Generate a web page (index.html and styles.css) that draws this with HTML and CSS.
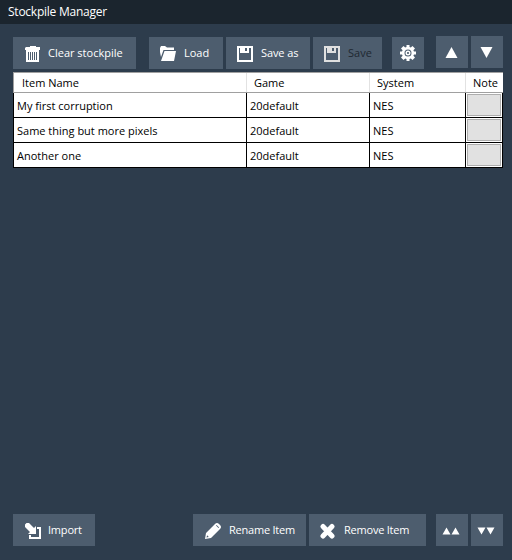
FILE: index.html
```html
<!DOCTYPE html>
<html lang="en">
<head>
<meta charset="utf-8">
<title>Stockpile Manager</title>
<link rel="stylesheet" href="styles.css">
</head>
<body>
<header class="titlebar">Stockpile Manager</header>
<main>
  <div class="toolbar">
    <button class="btn clear"><svg viewBox="0 0 16 16"><path d="M5 0h6v1h4v3H0V2l1-1h4zM1 4h13v12H1z"/><path class="cut" d="M3.500 6v8M5.500 6v8M7.500 6v8M9.500 6v8M11.500 6v8"/></svg><span>Clear stockpile</span></button>
    <button class="btn load"><svg viewBox="0 0 16 16"><path d="M0 2l1-2h4l2 1.500h7V4H3.500L1 11 0 6zM4.500 5H16l-2 10H1z"/></svg><span>Load</span></button>
    <button class="btn saveas"><svg viewBox="0 0 16 16"><path fill-rule="evenodd" d="M0 0h16v16H0zM2 2v12h12V2h-2v5H3V2zM8 2v3h2V2z"/></svg><span>Save as</span></button>
    <button class="btn save" disabled><svg viewBox="0 0 16 16"><path fill-rule="evenodd" d="M0 0h16v16H0zM2 2v12h12V2h-2v5H3V2zM8 2v3h2V2z"/></svg><span>Save</span></button>
    <button class="btn square gear" aria-label="Settings"><svg viewBox="0 0 16 16"><path fill-rule="evenodd" d="M6.500 0h3v2l1.300.6L12.500 1 15 3.500l-1.600 1.700.6 1.300h2v3h-2l-.6 1.300 1.600 1.700L12.500 15l-1.700-1.600-1.300.6v2h-3v-2l-1.300-.6L3.500 15 1 12.500l1.600-1.700L2 9.500H0v-3h2l.6-1.300L1 3.500 3.500 1l1.700 1.600L6.500 2zM8 4.500a3.500 3.500 0 1 0 0 7 3.500 3.500 0 0 0 0-7z"/><circle class="ring" cx="8" cy="8" r="1.800"/></svg></button>
    <button class="btn square up" aria-label="Move up"><svg class="single" viewBox="0 0 13 11"><path d="M6.500 0l6 11H.5z"/></svg></button>
    <button class="btn square down" aria-label="Move down"><svg class="single" viewBox="0 0 13 11"><path d="M.5 0h12l-6 11z"/></svg></button>
  </div>
  <section class="grid">
    <div class="row head"><div>Item Name</div><div>Game</div><div>System</div><div>Note</div></div>
    <div class="row"><div>My first corruption</div><div>20default</div><div>NES</div><div><i class="note"></i></div></div>
    <div class="row"><div>Same thing but more pixels</div><div>20default</div><div>NES</div><div><i class="note"></i></div></div>
    <div class="row"><div>Another one</div><div>20default</div><div>NES</div><div><i class="note"></i></div></div>
  </section>
</main>
<footer class="actions">
  <button class="btn import"><svg viewBox="0 0 16 16"><path d="M0 1.500L1.500 0h2.500L9 5l2-2v8H3l2-2L0 4zM12 4h4v12H4v-4h2v2h8V6h-2z"/></svg><span>Import</span></button>
  <button class="btn rename"><svg viewBox="0 0 16 16"><path fill-rule="evenodd" d="M0 16l1-6L10 1q2-2 4 0l1 1q2 2 0 4l-9 9zM1.500 14.500l2.300-.6-1.700-1.700zM11 2.500l2.500 2.500.6-.6-2.500-2.500z"/></svg><span>Rename Item</span></button>
  <button class="btn remove"><svg viewBox="0 0 16 16"><path class="cross" d="M3 3.500l9 9.500M12 3.500l-9 9.500"/></svg><span>Remove Item</span></button>
  <button class="btn square first" aria-label="Move to top"><svg class="pair" viewBox="0 0 18 8"><path d="M4.500.5l4 7h-8zM13.500.5l4 7h-8z"/></svg></button>
  <button class="btn square last" aria-label="Move to bottom"><svg class="pair" viewBox="0 0 18 8"><path d="M.5.500h8l-4 7zM9.500.500h8l-4 7z"/></svg></button>
</footer>
</body>
</html>
```
FILE: styles.css
```css
* { box-sizing: border-box; }
body {
  margin: 0;
  height: 560px;
  display: flex;
  flex-direction: column;
  overflow: hidden;
  background: #2d3c4c;
  color: #fff;
  font: 11px/16px "Open Sans", "Noto Sans", sans-serif;
}
.titlebar {
  height: 24px;
  padding-left: 8px;
  background: #1b252e;
  font-size: 12px;
  line-height: 24px;
  letter-spacing: -0.24px;
}
main { flex: 1; padding: 12px 9px 0 13px; }
.toolbar { display: flex; height: 36px; }
.btn {
  display: flex;
  align-items: center;
  flex: none;
  height: 32px;
  margin: 0;
  padding: 0 0 0 12px;
  border: 0;
  background: #4d5d6e;
  color: #fff;
  font: inherit;
  white-space: nowrap;
}
.toolbar .btn { margin-top: 1px; }
.btn svg { width: 16px; height: 16px; flex: none; margin-top: 2px; fill: #fff; }
.btn span { margin-left: 7px; }
.btn.square { width: 32px; padding: 0; justify-content: center; }
.cut { fill: none; stroke: #4d5d6e; stroke-width: 1; }
.ring { fill: none; stroke: #fff; stroke-width: 1.4; }
.cross { fill: none; stroke: #fff; stroke-width: 5; stroke-linecap: round; }
.clear { width: 123px; }
.btn.load { width: 74px; margin-left: 13px; padding-left: 11px; }
.btn.saveas { width: 84px; margin-left: 3px; padding-left: 11px; }
.btn.save { width: 69px; margin-left: 3px; padding-left: 11px; color: #1e2831; }
.btn.save svg { fill: #e0e0e0; }
.btn.gear { margin-left: 10px; }
.btn.gear svg { margin-top: 0; }
.toolbar .up { margin: 0 0 0 12px; }
.toolbar .down { margin: 0 0 0 3px; }
.btn.load span, .btn.saveas span, .btn.save span, .btn.rename span, .btn.remove span { margin-left: 8px; }
.btn.saveas span { letter-spacing: -0.1px; }
.btn svg.single { width: 13px; height: 11px; margin: 1px 2px 0 0; }
.grid { width: 490px; height: 96px; background: #fff; color: #000; }
.row {
  display: grid;
  grid-template-columns: 234px 123px 96px 37px;
  height: 25px;
  border-bottom: 1px solid #000;
}
.row > div { padding-left: 3px; border-right: 1px solid #000; line-height: 26px; white-space: nowrap; overflow: hidden; }
.row > div:first-child { border-left: 1px solid #000; }
.row.head { height: 21px; border-top: 1px solid #a0a0a0; border-bottom-color: #a0a0a0; }
.head > div { padding-left: 7px; border-color: #e2e2e2; line-height: 20px; }
.head > div:first-child { padding-left: 8px; border-left-color: #a0a0a0; }
.head > div:last-child { border-color: #fff; }
.row:not(.head) > div:last-child { padding: 1px; }
.note { display: block; width: 34px; height: 22px; border: 1px solid #adadad; background: #e1e1e1; }
.actions { display: flex; height: 46px; padding-left: 13px; }
.import { width: 82px; }
.btn.import span { letter-spacing: -0.2px; }
.btn.rename { width: 113px; margin-left: 98px; }
.btn.remove { width: 117px; margin-left: 3px; padding-left: 11px; }
.btn.rename span, .btn.remove span { letter-spacing: -0.22px; }
.btn.first { margin-left: 10px; }
.btn.last { margin-left: 3px; }
.btn svg.pair { width: 18px; height: 8px; margin: 1px 2px 0 0; }
```
